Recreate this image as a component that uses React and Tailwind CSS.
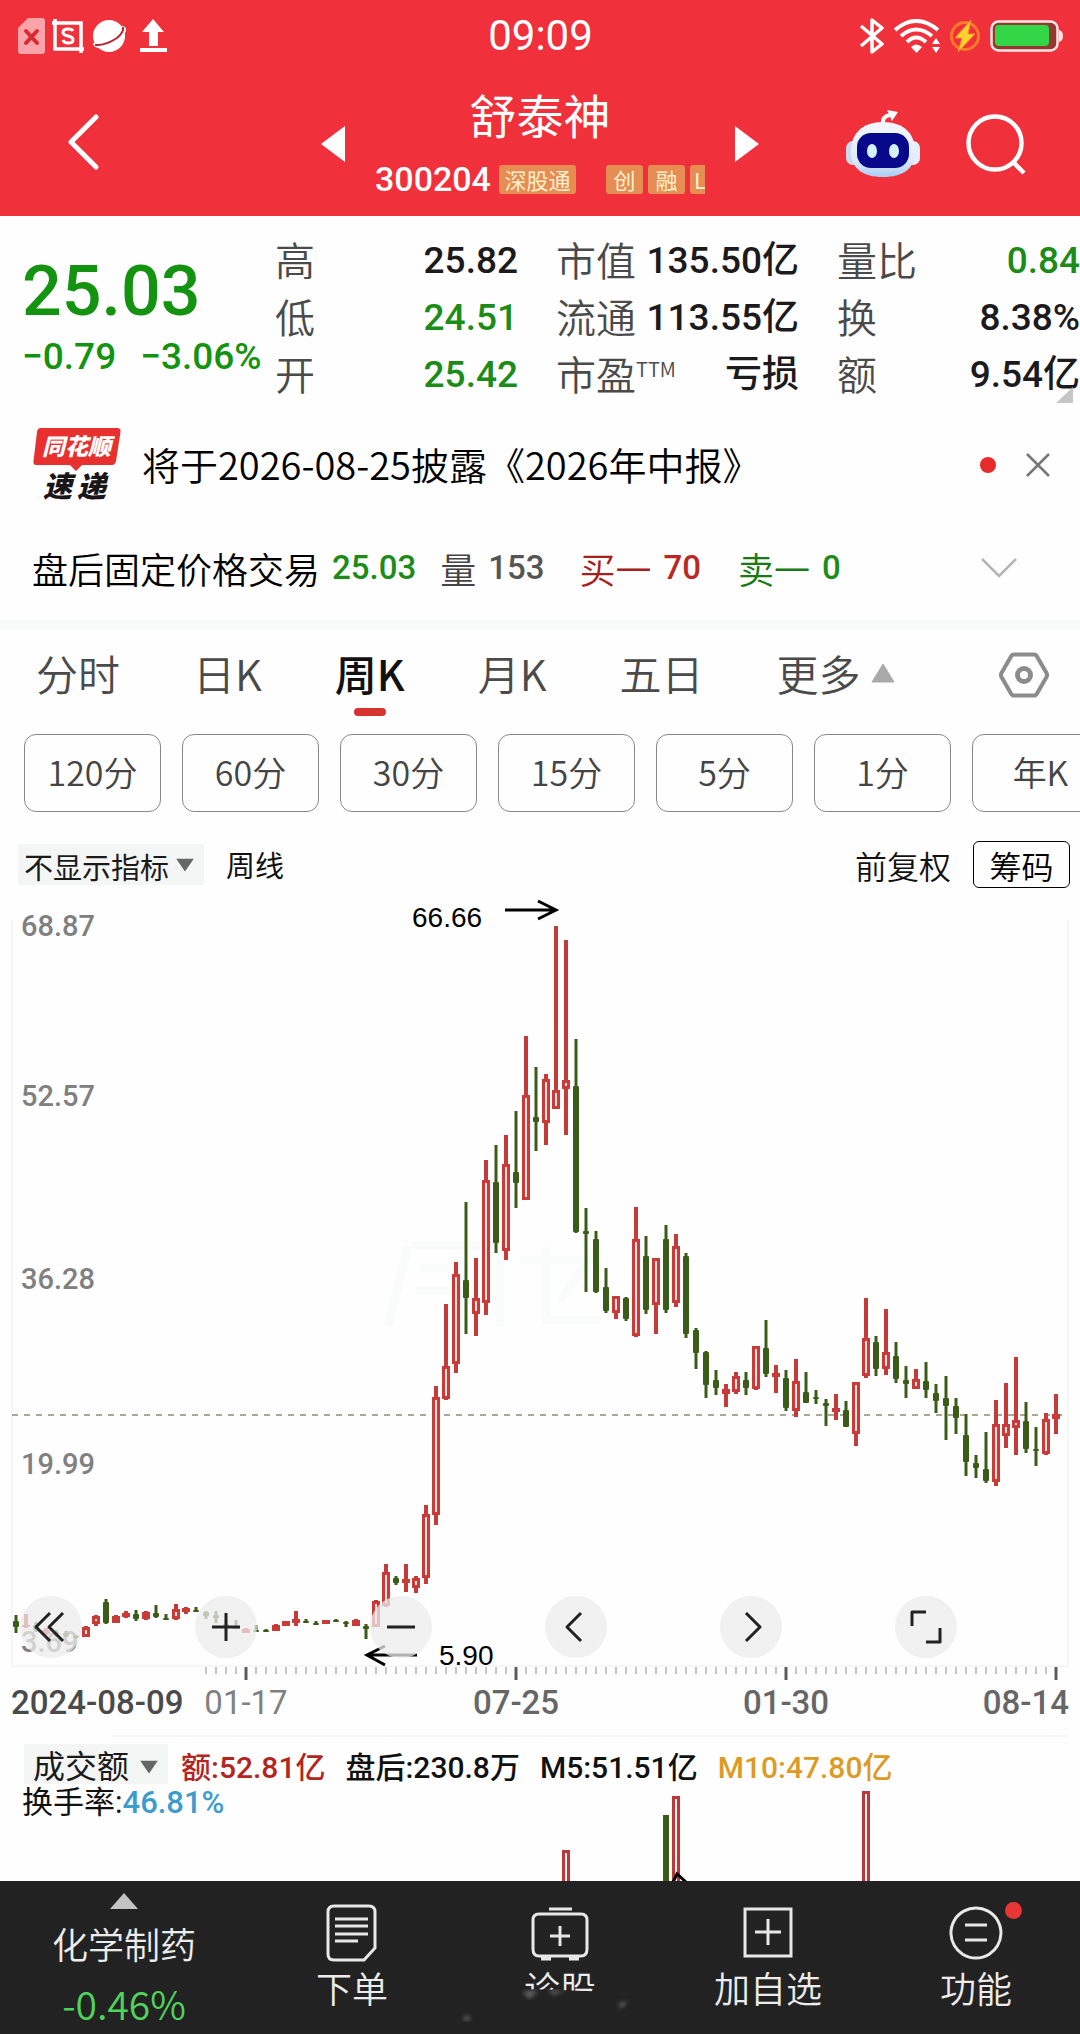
import { useState } from 'react';
import { clsx } from 'clsx';

const stats = [
  { label: '高', value: '25.82' },
  { label: '市值', value: '135.50亿' },
  { label: '量比', value: '0.84', green: true },
  { label: '低', value: '24.51', green: true },
  { label: '流通', value: '113.55亿' },
  { label: '换', value: '8.38%' },
  { label: '开', value: '25.42', green: true },
  { label: '市盈', sup: 'TTM', value: '亏损' },
  { label: '额', value: '9.54亿' },
];

const periods = ['分时', '日K', '周K', '月K', '五日'];
const minutes = ['120分', '60分', '30分', '15分', '5分', '1分', '年K'];

// [direction, high, body top, body bottom, low], one candle every 10 units
const candles = [
  ['g', 735, 741, 747, 753], ['r', 734, 745, 747, 748], ['g', 742, 745, 750, 752], ['r', 748, 750, 754, 755],
  ['g', 750, 752, 755, 757], ['g', 751, 753, 756, 757], ['g', 755, 756, 757, 758], ['r', 746, 747, 757, 757],
  ['r', 735, 736, 744, 746], ['g', 719, 722, 743, 744], ['r', 735, 736, 743, 743], ['r', 731, 733, 737, 738],
  ['g', 730, 734, 739, 741], ['r', 731, 732, 739, 740], ['g', 725, 733, 737, 738], ['g', 734, 738, 739, 740],
  ['r', 724, 729, 739, 740], ['r', 727, 728, 732, 734], ['g', 727, 730, 731, 732], ['g', 731, 732, 736, 739],
  ['g', 731, 735, 738, 743], ['g', 740, 744, 748, 749], ['g', 740, 746, 749, 749], ['r', 748, 749, 753, 753],
  ['g', 745, 750, 751, 752], ['g', 749, 750, 752, 752], ['r', 744, 745, 751, 751], ['r', 741, 741, 746, 746],
  ['r', 731, 739, 743, 746], ['g', 739, 741, 742, 743], ['g', 741, 743, 745, 745], ['r', 740, 740, 744, 744],
  ['g', 739, 740, 741, 742], ['g', 741, 742, 744, 747], ['r', 739, 740, 746, 746], ['g', 744, 746, 749, 759],
  ['r', 720, 721, 747, 747], ['r', 684, 692, 726, 727], ['g', 696, 698, 703, 705], ['r', 684, 699, 703, 712],
  ['r', 696, 698, 708, 713], ['r', 625, 634, 698, 704], ['r', 506, 517, 635, 645], ['r', 424, 486, 519, 520],
  ['r', 382, 394, 484, 493], ['g', 322, 400, 418, 454], ['r', 378, 418, 434, 456], ['r', 280, 300, 423, 435],
  ['g', 265, 302, 363, 373], ['r', 255, 284, 371, 380], ['g', 231, 292, 303, 328], ['r', 156, 215, 320, 320],
  ['g', 187, 237, 242, 271], ['r', 194, 199, 243, 265], ['r', 46, 210, 229, 229], ['r', 60, 200, 209, 255],
  ['g', 159, 206, 352, 353], ['g', 328, 351, 354, 412], ['g', 351, 359, 412, 413], ['g', 388, 407, 431, 433],
  ['r', 416, 416, 433, 439], ['g', 417, 418, 439, 441], ['r', 327, 359, 456, 457], ['g', 356, 376, 430, 434],
  ['r', 378, 378, 425, 454], ['g', 345, 359, 430, 433], ['r', 354, 366, 423, 427], ['g', 373, 376, 454, 458],
  ['g', 448, 450, 473, 489], ['g', 471, 472, 505, 518], ['g', 490, 500, 508, 515], ['r', 504, 509, 514, 527],
  ['r', 492, 496, 512, 514], ['g', 492, 500, 508, 515], ['r', 466, 466, 509, 510], ['g', 440, 468, 494, 497],
  ['r', 485, 493, 497, 513], ['g', 490, 498, 528, 531], ['r', 479, 501, 531, 537], ['g', 492, 512, 523, 523],
  ['g', 510, 517, 519, 524], ['g', 519, 523, 526, 546], ['r', 514, 528, 532, 540], ['g', 521, 530, 547, 547],
  ['r', 502, 502, 554, 566], ['r', 418, 458, 496, 498], ['g', 456, 462, 489, 496], ['r', 429, 472, 489, 495],
  ['g', 462, 476, 499, 503], ['g', 486, 500, 504, 518], ['r', 489, 499, 509, 509], ['g', 482, 501, 510, 518],
  ['g', 504, 513, 521, 533], ['g', 496, 518, 526, 560], ['g', 518, 526, 538, 554], ['g', 534, 555, 582, 596],
  ['g', 575, 583, 588, 598], ['g', 552, 589, 601, 603], ['r', 520, 544, 602, 606], ['r', 503, 544, 556, 568],
  ['r', 477, 540, 548, 575], ['g', 522, 541, 569, 573], ['g', 547, 569, 571, 586], ['r', 533, 539, 574, 575],
  ['r', 514, 534, 539, 554],
];

const priceLabels = [
  { text: '68.87', y: 56 },
  { text: '52.57', y: 226 },
  { text: '36.28', y: 409 },
  { text: '19.99', y: 594 },
  { text: '3.69', y: 772 },
];

function StatusBar() {
  return (
    <div className="grid h-[72px] grid-cols-[1fr_auto_1fr] items-center pl-[18px] pr-[17px]">
      <div className="flex items-center gap-[7px]">
        <svg width="27" height="36" viewBox="0 0 27 36">
          <path d="M10 0H24Q27 0 27 3V33Q27 36 24 36H3Q0 36 0 33V10Z" fill="#fba3a8" />
          <path d="M8 13L19 25M19 13L8 25" stroke="#d82a35" strokeWidth="4" strokeLinecap="round" />
        </svg>
        <svg width="32" height="34" viewBox="0 0 32 34" fill="none" stroke="#fff">
          <path d="M0 4H29V34M3 0V30H32" strokeWidth="3.500" />
          <path d="M21 12Q20 10 16 10Q11 10 11 13.500Q11 16 16 17Q21 18 21 21Q21 24 16 24Q12 24 11 21" strokeWidth="3" />
        </svg>
        <svg width="36" height="36" viewBox="0 0 36 36">
          <circle cx="18" cy="18" r="16" fill="#fff" />
          <path d="M31 9Q36 10 32 16Q25 26 13 28.500Q4 30 3 25" fill="none" stroke="#fff" strokeWidth="2.500" />
          <path d="M32 9Q33 14 26 20Q14 28 4 27" fill="none" stroke="#b8222c" strokeWidth="2" />
        </svg>
        <svg width="36" height="34" viewBox="0 0 36 34" fill="#fff">
          <path d="M19 0L30 13H24V27H15V13H8Z" />
          <path d="M6 29H33V33H6Z" />
        </svg>
      </div>
      <time className="font-[Roboto,sans-serif] text-[42px] leading-[48px] text-white">09:09</time>
      <div className="flex items-center justify-end gap-[9px]">
        <svg width="26" height="36" viewBox="0 0 26 36" fill="none" stroke="#fff" strokeWidth="3.500">
          <path d="M2 8L23 26L13 34V2L23 10L2 28" strokeLinejoin="round" />
        </svg>
        <svg width="46" height="34" viewBox="0 0 46 34" fill="none" stroke="#fff" strokeWidth="4">
          <path d="M1 11Q22 -7 44 11M7 17Q22 4 38 17M13 23Q22 14 32 23" />
          <path d="M17 28Q22 23 28 28L22.500 34Z" fill="#fff" stroke="none" />
          <path d="M42 19L46 25H38ZM42 34L46 28H38Z" fill="#fff" stroke="none" />
        </svg>
        <svg width="32" height="32" viewBox="0 0 32 32">
          <circle cx="16" cy="16" r="13.500" fill="none" stroke="#fb7a2b" strokeWidth="3" />
          <path d="M22 0L6 18H13L9 32L26 14H19Z" fill="#ffd22e" stroke="#fb8a2b" strokeWidth="1" />
        </svg>
        <svg width="73" height="32" viewBox="0 0 73 32">
          <rect x="1.500" y="1.500" width="66" height="29" rx="7" fill="#93392f" stroke="#ffe6e6" strokeWidth="2.500" />
          <rect x="5" y="5" width="54" height="21" rx="4" fill="#33d646" />
          <path d="M69 10Q73 11 73 16Q73 21 69 22Z" fill="#ffe6e6" />
        </svg>
      </div>
    </div>
  );
}

function Tag({ className, children }) {
  return (
    <span className={clsx('h-[29px] shrink-0 rounded-[3px] bg-[#e58d52] text-center text-[22px] leading-[28px] text-[#fff0cf]', className)}>
      {children}
    </span>
  );
}

function TitleBar() {
  return (
    <div className="grid h-[144px] grid-cols-[1fr_438px_1fr] items-center">
      <button aria-label="返回" className="ml-[66px] w-[36px]">
        <svg width="36" height="60" viewBox="0 0 36 60" fill="none" stroke="#fff" strokeWidth="5" strokeLinecap="round" strokeLinejoin="round">
          <path d="M30 3L5 28L30 53" />
        </svg>
      </button>
      <div className="flex h-full items-center justify-between">
        <button aria-label="上一只">
          <svg width="24" height="36" viewBox="0 0 24 36" fill="#fff"><path d="M24 0V36L0 18Z" /></svg>
        </button>
        <div className="flex h-full w-[330px] flex-col overflow-hidden pt-[15px]">
          <h1 className="text-center text-[47px] leading-[54px] text-white">舒泰神</h1>
          <div className="mt-[17px] flex items-center">
            <span className="mr-[8px] font-[Roboto,sans-serif] text-[34px] leading-[42px] font-medium text-white">300204</span>
            <Tag className="mr-[30px] w-[77px]">深股通</Tag>
            <Tag className="mr-[5px] w-[37px]">创</Tag>
            <Tag className="mr-[5px] w-[37px]">融</Tag>
            <Tag className="w-[16px] rounded-r-none pl-[4px] text-left">L</Tag>
          </div>
        </div>
        <button aria-label="下一只">
          <svg width="24" height="36" viewBox="0 0 24 36" fill="#fff"><path d="M0 0V36L24 18Z" /></svg>
        </button>
      </div>
      <div className="flex items-center justify-end gap-[46px] pr-[52px]">
        <button aria-label="智能助手">
          <svg width="74" height="70" viewBox="0 0 74 70">
            <defs>
              <linearGradient id="head" x1="0" y1="0" x2="0" y2="1">
                <stop offset="0" stopColor="#f4f8ff" />
                <stop offset="0.700" stopColor="#dfeafa" />
                <stop offset="1" stopColor="#a9cdf2" />
              </linearGradient>
            </defs>
            <path d="M37 15Q36 7 44 6" fill="none" stroke="#fff" strokeWidth="4" />
            <path d="M41 1L52 3L46 12Z" fill="#fff" />
            <rect x="0" y="32" width="14" height="24" rx="7" fill="#c9d9ee" />
            <rect x="60" y="32" width="14" height="24" rx="7" fill="#e6eefb" />
            <path d="M37 13C58 13 69 25 69 42C69 60 57 68 37 68C17 68 5 60 5 42C5 25 16 13 37 13Z" fill="url(#head)" />
            <rect x="11" y="24" width="52" height="35" rx="14" fill="#08088c" />
            <ellipse cx="26" cy="42" rx="5" ry="7" fill="#d5f3ff" />
            <ellipse cx="48" cy="42" rx="5" ry="7" fill="#d5f3ff" />
          </svg>
        </button>
        <button aria-label="搜索">
          <svg width="62" height="62" viewBox="0 0 62 62" fill="none" stroke="#fff" strokeWidth="4.500">
            <circle cx="29" cy="30" r="26.500" />
            <path d="M47 49L58 60" />
          </svg>
        </button>
      </div>
    </div>
  );
}

function Quote() {
  return (
    <section className="relative flex pt-[16px]">
      <div className="w-[275px] shrink-0 pt-[15px] pl-[22px] font-[Roboto,sans-serif] font-medium whitespace-nowrap text-[#13930f]">
        <div className="text-[70px] leading-[88px]">25.03</div>
        <div className="flex gap-[24px] text-[37px] leading-[44px]">
          <span>−0.79</span>
          <span>−3.06%</span>
        </div>
      </div>
      <dl className="grid flex-1 grid-cols-3 gap-x-[38px]">
        {stats.map((s) => (
          <div key={s.label} className="flex h-[57px] items-center justify-between whitespace-nowrap">
            <dt className="flex pb-[4px] text-[40px] leading-[48px] font-[350] text-[#4a4a4a]">
              {s.label}
              {s.sup && <span className="text-[20px] leading-[40px]">{s.sup}</span>}
            </dt>
            <dd
              className={clsx(
                "font-[Roboto,'Noto_Sans_CJK_SC',sans-serif] text-[37px] leading-[48px] font-medium",
                s.green ? 'text-[#1c8c18]' : 'text-[#1c1a1c]'
              )}
            >
              {s.value}
            </dd>
          </div>
        ))}
      </dl>
      <svg className="absolute right-[7px] bottom-0" width="17" height="16" viewBox="0 0 17 16">
        <path d="M17 0V16H0Z" fill="#c6c6c6" />
      </svg>
    </section>
  );
}

function News() {
  return (
    <section className="mt-[11px] flex h-[102px] items-center pr-[28px] pl-[33px]">
      <svg width="90" height="90" viewBox="0 -7 90 90" className="shrink-0">
        <path d="M8 1H84Q88 1 87.500 5L83 34Q82 38 79 38H49L43 44L37 38H3Q0 38 0.500 34L4 5Q4.500 1 8 1Z" fill="#e8302f" />
        <text x="9" y="28" fontSize="23" fontWeight="900" fontStyle="italic" fill="#fff">同花顺</text>
        <text y="70" fontSize="29" fontWeight="900" fontStyle="italic" fill="#1a1516">
          <tspan x="10">速</tspan>
          <tspan x="44">递</tspan>
        </text>
      </svg>
      <a href="#notice" className="ml-[19px] pb-[3px] text-[38px] leading-[48px] font-[350] whitespace-nowrap text-black">
        将于2026-08-25披露《2026年中报》
      </a>
      <i className="ml-auto size-[16px] rounded-full bg-[#e62b2b]" />
      <button aria-label="关闭" className="ml-[28px]">
        <svg width="28" height="28" viewBox="0 0 28 28" stroke="#777" strokeWidth="2.500">
          <path d="M3 3L25 25M25 3L3 25" />
        </svg>
      </button>
    </section>
  );
}

function AfterHours() {
  return (
    <section className="flex h-[104px] items-center pr-[62px] pl-[32px] text-[36px] leading-[48px] font-[350] whitespace-nowrap text-black">
      <span>盘后固定价格交易</span>
      <b className="ml-[12px] font-[Roboto,sans-serif] text-[33px] font-medium text-[#1c8c18]">25.03</b>
      <span className="ml-[24px] text-[#444]">量</span>
      <b className="ml-[12px] font-[Roboto,sans-serif] text-[33px] font-medium text-[#555]">153</b>
      <span className="ml-[35px] text-[#a8201c]">买一</span>
      <b className="ml-[12px] font-[Roboto,sans-serif] text-[33px] font-medium text-[#bb2724]">70</b>
      <span className="ml-[37px] text-[#187a14]">卖一</span>
      <b className="ml-[12px] font-[Roboto,sans-serif] text-[33px] font-medium text-[#1c8c18]">0</b>
      <button aria-label="展开" className="ml-auto">
        <svg width="38" height="22" viewBox="0 0 38 22" fill="none" stroke="#b5b5b5" strokeWidth="2.500">
          <path d="M2 2L19 19L36 2" />
        </svg>
      </button>
    </section>
  );
}

function PeriodTabs() {
  const [period, setPeriod] = useState('周K');

  return (
    <nav>
      <div className="flex h-[90px] items-center pr-[31px] pl-[36px] text-[42px] leading-[50px] font-[350] whitespace-nowrap text-[#4a4a4a]">
        <div className="flex h-full gap-[73px]">
          {periods.map((p) => (
            <button
              key={p}
              onClick={() => setPeriod(p)}
              className={clsx('relative h-full pb-[4px]', p === period && 'font-medium text-[#111]')}
            >
              {p}
              {p === period && (
                <i className="absolute bottom-[4px] left-1/2 h-[8px] w-[32px] -translate-x-1/2 rounded-full bg-[#d8322f]" />
              )}
            </button>
          ))}
          <button className="flex items-center gap-[10px] pb-[4px]">
            更多
            <svg width="24" height="20" viewBox="0 0 24 20" fill="#aaa"><path d="M12 1L23 19H1Z" stroke="#aaa" strokeLinejoin="round" /></svg>
          </button>
        </div>
        <button aria-label="设置" className="ml-auto">
          <svg width="50" height="46" viewBox="0 0 50 46" fill="none" stroke="#8c8c8c">
            <path d="M15 2.500H35Q37 2.500 38 4.500L47.500 21Q48.500 23 47.500 25L38 41.500Q37 43.500 35 43.500H15Q13 43.500 12 41.500L2.500 25Q1.500 23 2.500 21L12 4.500Q13 2.500 15 2.500Z" strokeWidth="4" />
            <circle cx="25" cy="23" r="6.500" strokeWidth="5" />
          </svg>
        </button>
      </div>
      <div className="mt-[14px] flex gap-[21px] overflow-hidden pl-[24px]">
        {minutes.map((m) => (
          <button key={m} className="h-[78px] w-[137px] shrink-0 rounded-[12px] border border-[#888] pb-[3px] text-[34px] font-[350] text-[#444]">
            {m}
          </button>
        ))}
      </div>
    </nav>
  );
}

function Dropdown({ label, option, className }) {
  return (
    <div className="relative shrink-0">
      <select
        aria-label={label}
        className={clsx('appearance-none bg-[#f4f6f6] text-[#1a1a1a]', className)}
      >
        <option>{option}</option>
      </select>
      <svg className="pointer-events-none absolute top-1/2 right-[10px] -translate-y-1/2" width="18" height="13" viewBox="0 0 18 13" fill="#666">
        <path d="M0 0H18L9 13Z" />
      </svg>
    </div>
  );
}

function Candle({ x, data }) {
  const [dir, high, top, bottom, low] = data;
  if (dir === 'g') {
    return (
      <g fill="#3a5c18">
        <rect x={x - 1.5} y={high} width="3" height={low - high} />
        <rect x={x - 3} y={top} width="6" height={Math.max(bottom - top, 2)} rx="1" />
      </g>
    );
  }
  return (
    <g>
      <rect x={x - 2} y={high} width="4" height={low - high} fill="#c43c3a" />
      <rect x={x - 4} y={top} width="8" height={bottom - top} fill="#c93a38" />
      {bottom - top > 7 && <rect x={x - 1} y={top + 3} width="2" height={bottom - top - 6} fill="#fbe0de" />}
    </g>
  );
}

function Chart() {
  const ticks = Array.from({ length: 86 }, (_, i) => 206 + i * 10);

  return (
    <section className="relative">
      <svg viewBox="0 8 1080 849" className="block w-full font-[Roboto,sans-serif]">
        <path d="M12 40V786H1068V40M110 856H1068" fill="none" stroke="#f5f7f7" strokeWidth="2" />
        <path d="M408 366L388 446M412 366H500M420 388H470M416 410H460V440M500 366V446M520 380H600M546 366V440H600M600 366L560 420" fill="none" stroke="#fafbfb" strokeWidth="8" />
        <path d="M12 535H1068" stroke="#8f8c70" strokeWidth="1.500" strokeDasharray="6 6" />
        {priceLabels.map((l) => (
          <text key={l.text} x="21" y={l.y} fontSize="29" fontWeight="500" fill="#808080">{l.text}</text>
        ))}
        {candles.map((c, i) => (
          <Candle key={i} x={16 + i * 10} data={c} />
        ))}
        <g fill="none" stroke="#000" strokeWidth="3">
          <path d="M505 30H556M538 21L556 30L538 39" />
          <path d="M417 775H367M385 766L367 775L385 785" />
        </g>
        <g fontFamily="Liberation Sans" fontSize="28" fill="#000">
          <text x="412" y="47">66.66</text>
          <text x="439" y="785">5.90</text>
        </g>
        {ticks.map((x) => {
          const major = (x - 246) % 270 === 0;
          return (
            <path key={x} d={major ? `M${x} 787V800` : `M${x} 787V794`} stroke={major ? '#5c5c5c' : '#8c8c8c'} strokeWidth={major ? 3 : 1} />
          );
        })}
        <g fontSize="33" fontWeight="500" fill="#666">
          <text x="11" y="834" fill="#4a4a4a">2024-08-09</text>
          <text x="246" y="834" textAnchor="middle" fontWeight="400" fill="#808080">01-17</text>
          <text x="516" y="834" textAnchor="middle">07-25</text>
          <text x="786" y="834" textAnchor="middle">01-30</text>
          <text x="1069" y="834" textAnchor="end">08-14</text>
        </g>
      </svg>
      <div className="absolute inset-x-0 bottom-[79px] flex justify-between pr-[123px] pl-[20px]">
        <ChartButton label="最早"><path d="M30 17L16 31L30 45M43 17L29 31L43 45" /></ChartButton>
        <ChartButton label="放大"><path d="M31 17V45M17 31H45" /></ChartButton>
        <ChartButton label="缩小"><path d="M17 31H45" /></ChartButton>
        <ChartButton label="左移"><path d="M36 17L22 31L36 45" /></ChartButton>
        <ChartButton label="右移"><path d="M26 17L40 31L26 45" /></ChartButton>
        <ChartButton label="全屏"><path d="M17 30V16H31M45 32V46H31" /></ChartButton>
      </div>
    </section>
  );
}

function ChartButton({ label, children }) {
  return (
    <button aria-label={label} className="size-[62px] rounded-full bg-[#ececec]/75">
      <svg width="62" height="62" viewBox="0 0 62 62" fill="none" stroke="#222" strokeWidth="3" strokeLinejoin="round">
        {children}
      </svg>
    </button>
  );
}

function Volume() {
  return (
    <section className="relative h-[144px] pt-[10px] pl-[24px] font-[Roboto,'Noto_Sans_CJK_SC',sans-serif] text-[30px] font-medium whitespace-nowrap text-[#111]">
      <svg viewBox="0 0 1080 92" className="absolute inset-x-0 bottom-0 w-full">
        <path d="M663 26H669V92H663Z" fill="#3a5c18" />
        <path d="M563.500 94V62.500H568.500V94M673.500 94V8.500H678.500V94M863.500 94V3.500H868.500V94" fill="#fdeeee" stroke="#b83a3c" strokeWidth="3" />
        <path d="M673 93L677 85L686 93" fill="none" stroke="#000" strokeWidth="3" />
      </svg>
      <div className="relative flex h-[40px] items-center">
        <Dropdown
          label="副图指标"
          option="成交额"
          className="h-[40px] w-[144px] pl-[9px] font-['Noto_Sans_CJK_SC',sans-serif] text-[32px] leading-[40px] font-normal"
        />
        <div className="flex gap-[20px] pl-[13px]">
          <span className="text-[#b3251f]">额:52.81亿</span>
          <span>盘后:230.8万</span>
          <span>M5:51.51亿</span>
          <span className="text-[#dd9a24]">M10:47.80亿</span>
        </div>
      </div>
      <div className="relative -ml-[2px] text-[31px] leading-[32px] font-normal">
        换手率:<span className="font-medium text-[#3d9ccb]">46.81%</span>
      </div>
    </section>
  );
}

function NavItem({ label, icon, badge, smudge }) {
  return (
    <button className="relative flex h-full flex-1 flex-col items-center pt-[22px] text-[36px] font-[350]">
      <span className="relative">
        <svg width="60" height="60" viewBox="0 0 60 60" fill="none" stroke="#e8e8e8" strokeWidth="3">{icon}</svg>
        {badge && <i className="absolute -top-[1px] -right-[16px] size-[17px] rounded-full bg-[#e83535]" />}
      </span>
      <span className="leading-[48px]">{label}</span>
      {smudge && (
        <svg className="absolute inset-x-0 bottom-0 w-full" viewBox="0 0 208 52">
          <defs>
            <filter id="soft"><feGaussianBlur stdDeviation="2" /></filter>
          </defs>
          <path d="M0 10Q60 6 104 8T208 10V52H0Z" fill="#222" />
          <path d="M66 10L82 8L74 17ZM92 9L108 8L98 13Z" fill="#666" filter="url(#soft)" />
          <path d="M6 37L12 34L14 38ZM162 23L171 19L166 25Z" fill="#888" filter="url(#soft)" />
        </svg>
      )}
    </button>
  );
}

function BottomNav() {
  return (
    <footer className="flex h-[153px] bg-[#222] text-[#ececec]">
      <button className="flex w-[248px] flex-col items-center pt-[12px] font-[350]">
        <svg width="28" height="16" viewBox="0 0 28 16" fill="#c4c4c4"><path d="M14 0L28 16H0Z" /></svg>
        <span className="mt-[10px] text-[36px] leading-[48px]">化学制药</span>
        <span className="mt-[12px] text-[39px] leading-[48px] text-[#4fd35b]">-0.46%</span>
      </button>
      <NavItem
        label="下单"
        icon={<path d="M12 3H47Q53 3 53 9V45L42 57H12Q6 57 6 51V9Q6 3 12 3ZM13 16H46M13 23H46M13 31H46M13 38H36" />}
      />
      <NavItem
        label="诊股"
        smudge
        icon={<path d="M19 6H42M9 11H51Q57 11 57 17V46Q57 53 51 53H9Q3 53 3 46V17Q3 11 9 11ZM30 23V43M20 33H40M11 56H21M39 56H49" />}
      />
      <NavItem label="加自选" icon={<path d="M7 6H53V53H7ZM30 16V42M17 29H43" />} />
      <NavItem label="功能" badge icon={<path d="M30 5A25 25 0 1 1 29.900 5ZM19 22H41M19 37H41" />} />
    </footer>
  );
}

export default function App() {
  return (
    <main className="overflow-hidden bg-[#fefefe] font-['Noto_Sans_CJK_SC',sans-serif]">
      <header className="bg-[#f0303a]">
        <StatusBar />
        <TitleBar />
      </header>
      <Quote />
      <News />
      <AfterHours />
      <div className="h-[10px] bg-[#f9fbfb]" />
      <PeriodTabs />
      <div className="mt-[29px] flex h-[47px] items-center pr-[10px] pl-[18px] whitespace-nowrap">
        <Dropdown label="主图指标" option="不显示指标" className="h-[41px] w-[186px] pt-[4px] pl-[6px] text-[29px] leading-[37px]" />
        <span className="ml-[22px] text-[29px] text-[#111]">周线</span>
        <button className="ml-auto text-[32px] font-[350] text-[#111]">前复权</button>
        <button className="ml-[22px] h-[47px] w-[97px] rounded-[6px] border border-black text-[32px] leading-[44px] font-[350] text-black">筹码</button>
      </div>
      <Chart />
      <Volume />
      <BottomNav />
    </main>
  );
}
